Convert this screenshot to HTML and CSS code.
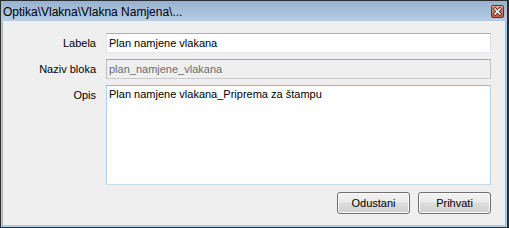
FILE: index.html
```html
<!DOCTYPE html>
<html>
<head>
<meta charset="utf-8">
<link rel="stylesheet" href="styles.css">
</head>
<body>
<div class="window">
  <div class="titlebar">
    <span class="title">Optika\Vlakna\Vlakna Namjena\...</span>
    <span class="close">
      <svg width="13" height="13" viewBox="0 0 13 13">
        <defs>
          <linearGradient id="cg" x1="0" y1="0" x2="0" y2="1">
            <stop offset="0" stop-color="#e9b1a4"/>
            <stop offset="0.5" stop-color="#d27a66"/>
            <stop offset="1" stop-color="#c65c45"/>
          </linearGradient>
        </defs>
        <rect x="0.5" y="0.5" width="12" height="12" rx="1.5" fill="url(#cg)" stroke="#6e2a20"/>
        <path d="M4 4 L9 9 M9 4 L4 9" stroke="#5a2018" stroke-width="3.2" stroke-linecap="square"/>
        <path d="M4 4 L9 9 M9 4 L4 9" stroke="#ffffff" stroke-width="1.6" stroke-linecap="square"/>
      </svg>
    </span>
  </div>
  <div class="frame">
    <div class="client">
      <div class="form">
        <label class="lbl">Labela</label>
        <input class="field" type="text" value="Plan namjene vlakana">
        <label class="lbl">Naziv bloka</label>
        <input class="field disabled" type="text" value="plan_namjene_vlakana" disabled>
        <label class="lbl">Opis</label>
        <textarea class="area">Plan namjene vlakana_Priprema za štampu</textarea>
      </div>
      <div class="buttons">
        <button class="btn">Odustani</button>
        <button class="btn">Prihvati</button>
      </div>
    </div>
  </div>
</div>
</body>
</html>
```
FILE: styles.css
```css
html, body {
  margin: 0;
  padding: 0;
  background: #ffffff;
}

.window {
  width: 509px;
  height: 228px;
  box-sizing: border-box;
  border-top: 1px solid #2e2e2e;
  border-left: 1px solid #2e2e2e;
  border-right: 2px solid #2e2e2e;
  border-bottom: 1px solid #2e2e2e;
  display: flex;
  flex-direction: column;
  font-family: "Liberation Sans", Arial, sans-serif;
}

.titlebar {
  height: 20px;
  flex: none;
  display: flex;
  align-items: flex-start;
  justify-content: space-between;
  background: linear-gradient(#98b2cf, #b5cde6);
  padding-left: 2px;
  padding-right: 3px;
}

.title {
  font-size: 12px;
  line-height: 20px;
  padding-top: 1px;
  color: #000;
  white-space: nowrap;
}

.close {
  display: block;
  width: 13px;
  height: 13px;
  margin-top: 4px;
}

.close svg {
  display: block;
}

.frame {
  flex: 1;
  display: flex;
  border-left: 1px solid #a9cde9;
  border-right: 1px solid #a9cde9;
  border-bottom: 2px solid #a9cde9;
}

.client {
  flex: 1;
  background: #efefef;
  border-left: 1px solid #b4b4b4;
  border-right: 1px solid #b4b4b4;
  padding: 12px 14px 0 5px;
  display: flex;
  flex-direction: column;
}

.form {
  display: grid;
  grid-template-columns: 88px 1fr;
  grid-template-rows: 20px 20px 100px;
  column-gap: 10px;
  row-gap: 6px;
}

.lbl {
  font-size: 11px;
  line-height: 20px;
  text-align: right;
  color: #000;
  white-space: nowrap;
  align-self: start;
}

.field {
  box-sizing: border-box;
  height: 20px;
  width: 100%;
  margin: 0;
  padding: 0 2px;
  border: 1px solid;
  border-color: #abadb3 #dbdfe6 #e3e9ef #e2e3ea;
  background: #ffffff;
  font-family: "Liberation Sans", Arial, sans-serif;
  font-size: 11px;
  color: #000;
  outline: none;
}

.field.disabled {
  background: #efefef;
  border-color: #a6a6a6 #c3c3c3 #c9c9c9 #bdbdbd;
  color: #6d6d6d;
}

.area {
  box-sizing: border-box;
  width: 100%;
  height: 100px;
  margin: 0;
  padding: 2px;
  border: 1px solid;
  border-color: #8fb9dc #b4d4ec #c2dcf0 #b4d4ec;
  background: #ffffff;
  font-family: "Liberation Sans", Arial, sans-serif;
  font-size: 11px;
  color: #000;
  resize: none;
  outline: none;
  overflow: hidden;
}

.buttons {
  display: flex;
  justify-content: flex-end;
  gap: 8px;
  margin-top: 7px;
}

.btn {
  box-sizing: border-box;
  width: 73px;
  height: 22px;
  margin: 0;
  padding: 0;
  border: 1px solid #707070;
  border-radius: 3px;
  background: linear-gradient(#f2f2f2 0%, #ebebeb 45%, #dddddd 50%, #cfcfcf 100%);
  box-shadow: inset 0 0 0 1px #fbfbfb;
  font-family: "Liberation Sans", Arial, sans-serif;
  font-size: 11px;
  color: #000;
}
```
